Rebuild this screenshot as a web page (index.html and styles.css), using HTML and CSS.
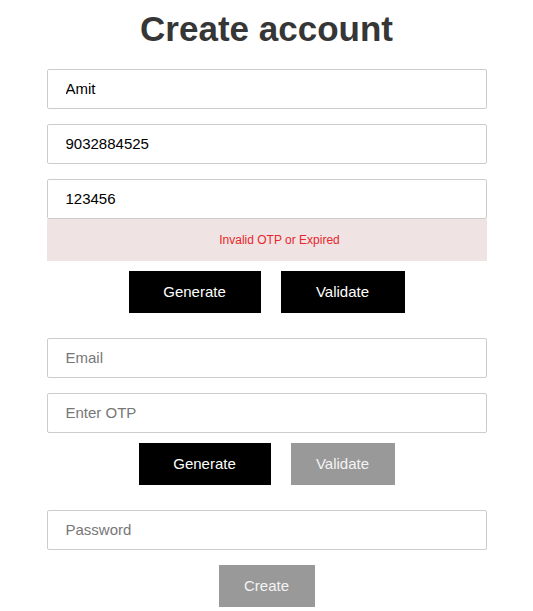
FILE: index.html
```html
<!DOCTYPE html>
<html lang="en">
<head>
<meta charset="utf-8">
<title>Create account</title>
<link rel="stylesheet" href="styles.css">
</head>
<body>
<main class="page">
  <h1 class="title">Create account</h1>
  <form class="form">
    <input class="field" type="text" value="Amit">
    <input class="field" type="text" value="9032884525">
    <div class="otp-group">
      <input class="field field-attached" type="text" value="123456">
      <div class="error">Invalid OTP or Expired</div>
    </div>
    <div class="actions actions-first">
      <button type="button" class="btn btn-dark btn-gen">Generate</button>
      <button type="button" class="btn btn-dark btn-val">Validate</button>
    </div>
    <input class="field field-email" type="email" placeholder="Email">
    <input class="field" type="text" placeholder="Enter OTP">
    <div class="actions actions-second">
      <button type="button" class="btn btn-dark btn-gen">Generate</button>
      <button type="button" class="btn btn-grey btn-val-sm">Validate</button>
    </div>
    <input class="field field-pass" type="password" placeholder="Password">
    <div class="actions actions-create">
      <button type="button" class="btn btn-grey btn-create">Create</button>
    </div>
  </form>
</main>
</body>
</html>
```
FILE: styles.css
```css
* { box-sizing: border-box; }
html, body { margin: 0; padding: 0; background: #fff; }
body { font-family: "Liberation Sans", Arial, sans-serif; }

.page {
  width: 440px;
  margin: 0 auto;
  padding-top: 9px;
}

.title {
  margin: 0 0 20px;
  font-size: 35px;
  line-height: 40px;
  font-weight: bold;
  color: #363636;
  text-align: center;
}

.form {
  display: flex;
  flex-direction: column;
}

.field {
  display: block;
  width: 100%;
  height: 40px;
  margin: 0 0 15px;
  padding: 0 18px 2px;
  border: 1px solid #cccccc;
  border-radius: 2px;
  font-family: "Liberation Sans", Arial, sans-serif;
  font-size: 15px;
  color: #000;
  background: #fff;
  outline: none;
}
.field::placeholder { color: #777; }

.otp-group { display: flex; flex-direction: column; }
.field-attached { margin-bottom: 0; }

.error {
  height: 42px;
  display: flex;
  align-items: center;
  justify-content: center;
  padding-left: 26px;
  background: #efe3e3;
  color: #e8262b;
  font-size: 12px;
}

.actions {
  display: flex;
  justify-content: center;
  gap: 20px;
}
.actions-first { margin: 10px 0 25px; }
.actions-second { margin: -5px 0 25px; }
.actions-create { margin: 0; }

.btn {
  height: 42px;
  border: none;
  border-radius: 0;
  padding: 0 0 2px;
  font-family: "Liberation Sans", Arial, sans-serif;
  font-size: 15px;
  color: #fff;
}
.btn-dark { background: #000; }
.btn-grey { background: #999; color: #f4f4f4; }
.btn-gen { width: 132px; }
.btn-val { width: 124px; }
.btn-val-sm { width: 104px; }
.btn-create { width: 96px; }
```
